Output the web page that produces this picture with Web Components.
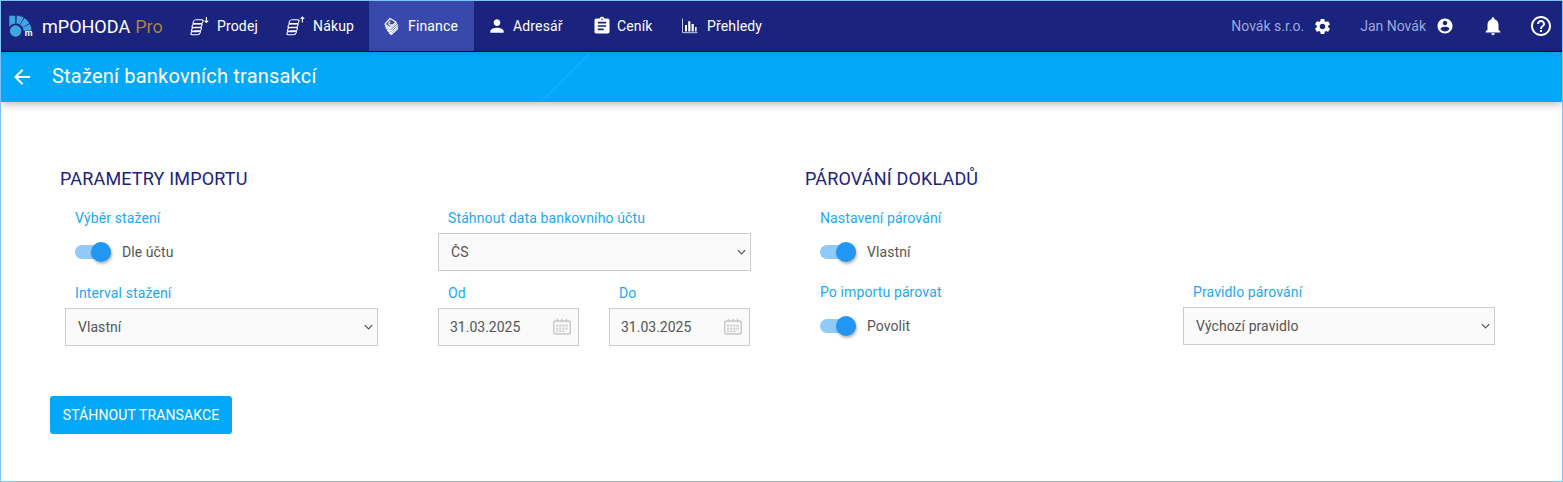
<!DOCTYPE html>
<html lang="cs">
<head>
<meta charset="utf-8">
<title>mPOHODA</title>
<style>
html,body{margin:0;padding:0;background:#fff}
body{font-family:Roboto,"Liberation Sans",sans-serif;font-size:14px;color:#555}
</style>
</head>
<body>
<app-shell>
  <top-nav slot="nav"></top-nav>
  <sub-header slot="sub">Stažení bankovních transakcí</sub-header>
  <import-form slot="main"></import-form>
</app-shell>

<template id="t-shell">
<style>
:host{display:flex;flex-direction:column;box-sizing:border-box;width:1563px;height:482px;border:1px solid #7cc4fa;background:#fff;overflow:hidden}
</style>
<slot name="nav"></slot><slot name="sub"></slot><slot name="main"></slot>
</template>

<template id="t-nav">
<style>
:host{display:flex;align-items:stretch;height:50px;background:#1a237e;border-bottom:1px solid #0a0f45;color:#fff;font:400 14px Roboto,sans-serif;flex:none}
.brand{display:flex;align-items:center;width:188px;box-sizing:border-box;padding-left:8px;font-size:18px;white-space:nowrap}
.brand svg{width:26px;height:26px;margin-right:7px;margin-top:4px;flex:none;overflow:visible}
.brand b{font-weight:400;color:#a5843c;margin-left:5px}
.logo-m{font:700 9px Roboto,sans-serif;fill:#fff}
nav-item{flex:none}
.grow{flex:1}
.right{display:flex;align-items:center;color:#9fa8da;padding-right:9px}
.right svg{fill:#fff;display:block;flex:none}
</style>
<div class="brand">
  <svg viewBox="0 0 26 26">
    <g fill="#3fa5e0">
      <circle cx="6.6" cy="16" r="5.7"/>
      <path d="M.3.8H6.3V8.6A7.5 7.5 0 0 0 .6 11.6L.3 11z"/>
      <path d="M7.8.5A15.5 15.5 0 0 1 14.75 2.6L10.75 9.5A7.5 7.5 0 0 0 7.4 8.5z"/>
      <path d="M15.4 3A15.5 15.5 0 0 1 20.4 8.25L13.5 12.25A7.5 7.5 0 0 0 11.1 9.7z"/>
      <path d="M20.8 9A15.5 15.5 0 0 1 22.5 15.5L14.5 15.7A7.5 7.5 0 0 0 13.7 12.6z"/>
    </g>
    <text class="logo-m" x="15.8" y="21.3">m</text>
  </svg>
  <span>mPOHODA<b>Pro</b></span>
</div>
<nav-item style="width:96px" offset="1" gap="7" label="Prodej"><svg slot="icon" width="20" height="20" viewBox="0 0 20 20" fill="none" stroke="#fff" stroke-width="1.1"><g transform="skewX(-18)"><rect x="5.2" y="3.8" width="9.6" height="4.2" rx="2"/><rect x="5.4" y="7.6" width="9.6" height="4.2" rx="2"/><rect x="6" y="11.4" width="9.6" height="4.2" rx="2"/><rect x="6.6" y="14.8" width="9" height="4" rx="2"/></g><path d="M16.4 1v5.4M14.6 4.6l1.8 1.9 1.8-1.9"/></svg></nav-item>
<nav-item style="width:84px" offset="1" gap="7" label="Nákup"><svg slot="icon" width="20" height="20" viewBox="0 0 20 20" fill="none" stroke="#fff" stroke-width="1.1"><g transform="skewX(-18)"><rect x="5.2" y="3.8" width="9.6" height="4.2" rx="2"/><rect x="5.4" y="7.6" width="9.6" height="4.2" rx="2"/><rect x="6" y="11.4" width="9.6" height="4.2" rx="2"/><rect x="6.6" y="14.8" width="9" height="4" rx="2"/></g><path d="M16.4 6.4V1M14.6 2.9L16.4 1l1.8 1.9"/></svg></nav-item>
<nav-item active style="width:105px" offset="14" gap="6" label="Finance"><svg slot="icon" width="19" height="19" viewBox="0 0 19 19" fill="none" stroke="#fff" stroke-width="1.2"><path d="M7 1.5l6 3.6-6 5.4L2 7.2z"/><path d="M7.4 4.6a1.8 1.8 0 1 0 1.8 2.6"/><path d="M2 8.7l5.2 3.4 6.6-6M2.6 10.8l5 3.2 7.4-6.6M4 13.2l4 2.6 7.2-6.4M6 15.8l2.4 1.6 6.6-6"/></svg></nav-item>
<nav-item style="width:103px" offset="13" gap="6" label="Adresář"><svg slot="icon" width="20" height="20" viewBox="0 0 24 24" fill="#fff"><path d="M12 12c2.21 0 4-1.79 4-4s-1.79-4-4-4-4 1.79-4 4 1.79 4 4 4zm0 2c-2.67 0-8 1.34-8 4v2h16v-2c0-2.66-5.33-4-8-4z"/></svg></nav-item>
<nav-item style="width:90px" offset="15" gap="5" label="Ceník"><svg slot="icon" width="20" height="20" viewBox="0 0 24 24" fill="#fff"><path d="M19 3h-4.18C14.4 1.84 13.3 1 12 1c-1.3 0-2.4.84-2.82 2H5c-1.1 0-2 .9-2 2v14c0 1.1.9 2 2 2h14c1.1 0 2-.9 2-2V5c0-1.1-.9-2-2-2zm-7 0c.55 0 1 .45 1 1s-.45 1-1 1-1-.45-1-1 .45-1 1-1zm2 14H7v-2h7v2zm3-4H7v-2h10v2zm0-4H7V7h10v2z"/></svg></nav-item>
<nav-item offset="14" gap="8" label="Přehledy"><svg slot="icon" width="18" height="18" viewBox="0 0 18 18"><path d="M1.5 1.5v14.2H16.5" fill="none" stroke="#c5cae9" stroke-width="1"/><path d="M4 8h2v6.5H4zM7.2 4.2h2.2v10.3H7.2zM10.6 7h2.2v7.5h-2.2zM14 10h1.6v4.5H14z" fill="#fff"/></svg></nav-item>
<div class="grow"></div>
<div class="right">
  <span>Novák s.r.o.</span>
  <svg style="width:19px;height:19px;margin-left:9px" viewBox="0 0 24 24"><path d="M19.14 12.94c.04-.3.06-.61.06-.94 0-.32-.02-.64-.07-.94l2.03-1.58c.18-.14.23-.41.12-.61l-1.92-3.32c-.12-.22-.37-.29-.59-.22l-2.39.96c-.5-.38-1.03-.7-1.62-.94l-.36-2.54c-.04-.24-.24-.41-.48-.41h-3.84c-.24 0-.43.17-.47.41l-.36 2.54c-.59.24-1.13.57-1.62.94l-2.39-.96c-.22-.08-.47 0-.59.22L2.74 8.87c-.12.21-.08.47.12.61l2.03 1.58c-.05.3-.09.63-.09.94s.02.64.07.94l-2.03 1.58c-.18.14-.23.41-.12.61l1.92 3.32c.12.22.37.29.59.22l2.39-.96c.5.38 1.03.7 1.62.94l.36 2.54c.05.24.24.41.48.41h3.84c.24 0 .44-.17.47-.41l.36-2.54c.59-.24 1.13-.56 1.62-.94l2.39.96c.22.08.47 0 .59-.22l1.92-3.32c.12-.22.07-.47-.12-.61l-2.01-1.58zM12 15.6c-1.98 0-3.6-1.62-3.6-3.6s1.62-3.6 3.6-3.6 3.6 1.62 3.6 3.6-1.62 3.6-3.6 3.6z"/></svg>
  <span style="margin-left:28px">Jan Novák</span>
  <svg style="width:18px;height:18px;margin-left:10px" viewBox="0 0 24 24"><path d="M12 2C6.48 2 2 6.48 2 12s4.48 10 10 10 10-4.48 10-10S17.52 2 12 2zm0 3c1.66 0 3 1.34 3 3s-1.34 3-3 3-3-1.34-3-3 1.34-3 3-3zm0 14.2c-2.5 0-4.71-1.28-6-3.22.03-1.99 4-3.08 6-3.08 1.99 0 5.97 1.09 6 3.08-1.29 1.94-3.5 3.22-6 3.22z"/></svg>
  <svg style="width:22px;height:22px;margin-left:28px" viewBox="0 0 24 24"><path d="M12 22c1.1 0 2-.9 2-2h-4c0 1.1.89 2 2 2zm6-6v-5c0-3.07-1.64-5.64-4.5-6.32V4c0-.83-.67-1.5-1.5-1.5s-1.5.67-1.5 1.5v.68C7.63 5.36 6 7.92 6 11v5l-2 2v1h16v-1l-2-2z"/></svg>
  <svg style="width:24px;height:24px;margin-left:25px" viewBox="0 0 24 24"><path d="M11 18h2v-2h-2v2zm1-16C6.48 2 2 6.48 2 12s4.48 10 10 10 10-4.48 10-10S17.52 2 12 2zm0 18c-4.41 0-8-3.59-8-8s3.59-8 8-8 8 3.59 8 8-3.59 8-8 8zm0-14c-2.21 0-4 1.79-4 4h2c0-1.1.9-2 2-2s2 .9 2 2c0 2-3 1.75-3 5h2c0-2.25 3-2.5 3-5 0-2.21-1.79-4-4-4z"/></svg>
</div>
</template>

<template id="t-item">
<style>
:host{display:flex;align-items:center;box-sizing:border-box;color:#fff;font:400 14px Roboto,sans-serif;letter-spacing:.15px;white-space:nowrap}
:host([active]){background:#3949ab}
::slotted(svg){display:block;flex:none}
</style>
<slot name="icon"></slot><span id="l"></span>
</template>

<template id="t-sub">
<style>
:host{display:flex;align-items:center;position:relative;height:50px;flex:none;background:#03a9f8;color:#fff;font:400 20px Roboto,sans-serif;letter-spacing:.21px;box-shadow:0 2px 8px rgba(0,0,0,.28);z-index:1;overflow:visible}
.back{display:block;width:24px;height:24px;margin-left:9px;margin-right:18px;fill:#fff;flex:none}
.streak{position:absolute;left:539px;top:0;width:51px;height:50px;pointer-events:none}
.top{position:absolute;left:0;right:0;top:0;height:5px;background:linear-gradient(rgba(0,0,0,.07),rgba(0,0,0,0));pointer-events:none}
</style>
<div class="top"></div>
<svg class="streak" viewBox="0 0 51 50"><path d="M51 0L1 50" stroke="#fff" stroke-opacity=".13" fill="none"/></svg>
<svg class="back" viewBox="0 0 24 24"><path d="M20 11H7.83l5.59-5.59L12 4l-8 8 8 8 1.41-1.41L7.83 13H20v-2z"/></svg>
<span style="margin-top:-2px"><slot></slot></span>
</template>

<template id="t-form">
<style>
:host{display:block;flex:1;padding:66px 0 0 49px;font:400 14px Roboto,sans-serif;color:#555}
.cols{display:flex;padding-left:10px}
section{width:745px;flex:none}
h2{margin:0;font:400 18px/22px Roboto,sans-serif;letter-spacing:.17px;color:#1a237e;height:22px}
.grid{display:grid;grid-template-columns:373px 373px;padding-left:5px}
.cell{width:313px}
.row{display:flex;gap:30px}
.btn{margin-top:50px}
</style>
<div class="cols">
  <section>
    <h2>PARAMETRY IMPORTU</h2>
    <div class="grid">
      <form-field class="cell" label="Výběr stažení" style="margin-top:20px"><toggle-switch>Dle účtu</toggle-switch></form-field>
      <form-field class="cell" label="Stáhnout data bankovního účtu" style="margin-top:20px"><select-box>ČS</select-box></form-field>
      <form-field class="cell" label="Interval stažení" style="margin-top:14px"><select-box>Vlastní</select-box></form-field>
      <div class="cell row" style="margin-top:14px">
        <form-field label="Od" style="width:141px"><date-box>31.03.2025</date-box></form-field>
        <form-field label="Do" style="width:141px"><date-box>31.03.2025</date-box></form-field>
      </div>
    </div>
  </section>
  <section>
    <h2>PÁROVÁNÍ DOKLADŮ</h2>
    <div class="grid">
      <form-field class="cell" label="Nastavení párování" style="margin-top:20px"><toggle-switch>Vlastní</toggle-switch></form-field>
      <div></div>
      <form-field class="cell" label="Po importu párovat" style="margin-top:13px"><toggle-switch>Povolit</toggle-switch></form-field>
      <form-field class="cell" label="Pravidlo párování" style="margin-top:13px;width:312px"><select-box>Výchozí pravidlo</select-box></form-field>
    </div>
  </section>
</div>
<action-button class="btn">STÁHNOUT TRANSAKCE</action-button>
</template>

<template id="t-field">
<style>
:host{display:block}
label{display:block;height:16px;margin:0 0 7px 10px;color:#1ba9f5;font:400 14px/16px Roboto,sans-serif;letter-spacing:.12px;white-space:nowrap}
</style>
<label id="l"></label><slot></slot>
</template>

<template id="t-toggle">
<style>
:host{display:flex;align-items:center;height:38px;margin-left:10px;color:#555;font:400 14px Roboto,sans-serif;letter-spacing:.08px}
.sw{position:relative;width:36px;height:14px;border-radius:7px;background:#90caf9;margin-right:11px;flex:none}
.k{position:absolute;right:0;top:-3px;width:20px;height:20px;border-radius:50%;background:#2196f3;box-shadow:1px 2px 3px rgba(0,0,0,.3)}
</style>
<div class="sw"><div class="k"></div></div><slot></slot>
</template>

<template id="t-select">
<style>
:host{display:block;position:relative}
select{display:block;width:100%;height:38px;box-sizing:border-box;border:1px solid #ccc;background:#fafafa;color:#555;font:400 14px Roboto,sans-serif;letter-spacing:.06px;padding:0 12px;border-radius:0;outline:0;appearance:none;-webkit-appearance:none}
svg{position:absolute;right:5px;top:16px;pointer-events:none}
</style>
<select><option id="o"></option></select>
<svg width="9" height="7" viewBox="0 0 9 7" fill="none" stroke="#555" stroke-width="1.2"><path d="M.8 1.2l3.7 3.7 3.7-3.7"/></svg>
</template>

<template id="t-date">
<style>
:host{display:flex;align-items:center;box-sizing:border-box;height:38px;border:1px solid #ccc;background:#fafafa;padding:0 6px 0 11px}
span{flex:1;color:#555;font:400 14px Roboto,sans-serif}
svg{display:block;flex:none}
</style>
<span><slot></slot></span>
<svg width="20" height="18" viewBox="0 0 20 18"><g fill="none" stroke="#c6c6c6"><rect x="1.7" y="3" width="16.6" height="13" rx="2" stroke-width="1.4"/><path d="M5.5.8v3.4M10 .8v3.4M14.5.8v3.4" stroke-width="1.3"/></g><g fill="#cfcfcf"><rect x="4" y="6.6" width="2.2" height="2"/><rect x="7.1" y="6.6" width="2.2" height="2"/><rect x="10.2" y="6.6" width="2.2" height="2"/><rect x="13.3" y="6.6" width="2.4" height="2"/><rect x="4" y="9.6" width="2.2" height="2"/><rect x="7.1" y="9.6" width="2.2" height="2"/><rect x="10.2" y="9.6" width="2.2" height="2"/><rect x="13.3" y="9.6" width="2.4" height="2"/><rect x="7.1" y="12.4" width="2.2" height="1.8"/><rect x="10.2" y="12.4" width="2.2" height="1.8"/><rect x="4" y="12.4" width="2.2" height="1.8"/></g></svg>
</template>

<template id="t-btn">
<style>
:host{display:block;width:182px}
button{display:block;width:100%;height:38px;border:0;border-radius:3px;background:#03a9f8;color:#fff;font:400 14px Roboto,sans-serif;letter-spacing:.12px;padding:0;white-space:nowrap}
</style>
<button><slot></slot></button>
</template>

<script>
const def=(tag,tpl,init)=>customElements.define(tag,class extends HTMLElement{
  constructor(){super();const r=this.attachShadow({mode:'open'});r.appendChild(document.getElementById(tpl).content.cloneNode(true));}
  connectedCallback(){if(init)init(this,this.shadowRoot);}
});
def('app-shell','t-shell');
def('top-nav','t-nav');
def('nav-item','t-item',(h,r)=>{r.getElementById('l').textContent=h.getAttribute('label');
  h.style.paddingLeft=(h.getAttribute('offset')||0)+'px';
  r.getElementById('l').style.marginLeft=(h.getAttribute('gap')||0)+'px';});
def('sub-header','t-sub');
def('import-form','t-form');
def('form-field','t-field',(h,r)=>{r.getElementById('l').textContent=h.getAttribute('label');});
def('toggle-switch','t-toggle');
def('select-box','t-select',(h,r)=>{r.getElementById('o').textContent=h.textContent.trim();});
def('date-box','t-date');
def('action-button','t-btn');
</script>
</body>
</html>
